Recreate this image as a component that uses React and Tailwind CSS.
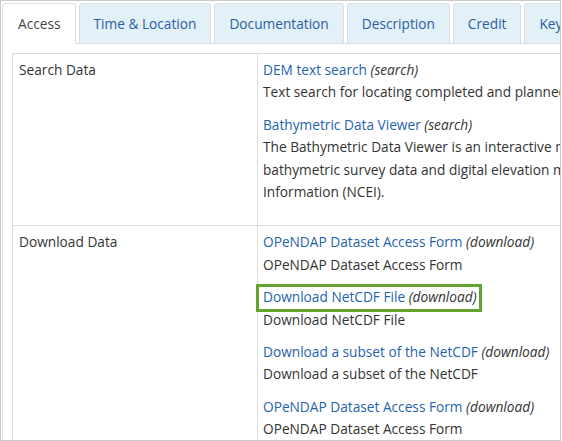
import React from 'react';

const tabs = ['Access', 'Time & Location', 'Documentation', 'Description', 'Credit', 'Keywords'];

function Entry({ title, kind, lines, boxed, last }) {
    return (
        <div className={last ? '' : 'mb-[10px]'}>
            <div className="whitespace-nowrap">
                <span className="relative inline-block">
                    <a className="text-[#1f63ad]">{title}</a> <i>({kind})</i>
                    {boxed && (
                        <span className="absolute -left-[7px] -right-[5px] -top-[2px] -bottom-[3px] border-[3px] border-[#63a22c]" />
                    )}
                </span>
            </div>
            {lines.map((l) => (
                <div key={l} className="whitespace-nowrap">{l}</div>
            ))}
        </div>
    );
}

export default function App() {
    return (
        <div className="w-[561px] h-[441px] overflow-hidden border border-[#c9c9c9] bg-white font-['Open_Sans',sans-serif] text-[13.7px] leading-[22.4px] text-[#333]">
            <div className="pl-px pt-[2px] h-full flex flex-col">
                {/* Tabs */}
                <ul className="flex h-[41px] border-b border-[#dcdcdc] shrink-0">
                    {tabs.map((t, i) =>
                        i === 0 ? (
                            <li
                                key={t}
                                className="shrink-0 h-[41px] mr-[3px] pl-[15px] pr-[14px] pt-px flex items-center bg-white border border-b-0 border-[#dcdcdc] rounded-t-[4px] text-[#444] whitespace-nowrap"
                            >
                                {t}
                            </li>
                        ) : (
                            <li
                                key={t}
                                className="shrink-0 h-[40px] mr-[3px] px-[14px] pt-px flex items-center bg-[#e2f0f7] border border-b-0 border-[#dcdcdc] rounded-t-[4px] text-[#2a5ea3] whitespace-nowrap"
                            >
                                {t}
                            </li>
                        )
                    )}
                </ul>

                {/* Panel */}
                <div className="flex-1 border-l border-[#dcdcdc] pl-[9px] pt-[9px]">
                    <div className="w-[700px] border-t border-l border-[#dcdcdc]">
                        <div className="flex border-b border-[#dcdcdc]">
                            <div className="w-[245px] shrink-0 border-r border-[#dcdcdc] pl-[6px] pt-[5px]">Search Data</div>
                            <div className="flex-1 pl-[5px] pt-[5px] pb-[22px]">
                                <Entry
                                    title="DEM text search"
                                    kind="search"
                                    lines={['Text search for locating completed and planned digital elevation models.']}
                                />
                                <Entry
                                    title="Bathymetric Data Viewer"
                                    kind="search"
                                    lines={[
                                        'The Bathymetric Data Viewer is an interactive map that displays',
                                        'bathymetric survey data and digital elevation models held at NOAA',
                                        'Information (NCEI).',
                                    ]}
                                    last
                                />
                            </div>
                        </div>
                        <div className="flex">
                            <div className="w-[245px] shrink-0 border-r border-[#dcdcdc] pl-[6px] pt-[5px]">Download Data</div>
                            <div className="flex-1 pl-[5px] pt-[5px]">
                                <Entry title="OPeNDAP Dataset Access Form" kind="download" lines={['OPeNDAP Dataset Access Form']} />
                                <Entry title="Download NetCDF File" kind="download" lines={['Download NetCDF File']} boxed />
                                <Entry title="Download a subset of the NetCDF" kind="download" lines={['Download a subset of the NetCDF']} />
                                <Entry title="OPeNDAP Dataset Access Form" kind="download" lines={['OPeNDAP Dataset Access Form']} />
                            </div>
                        </div>
                    </div>
                </div>
            </div>
        </div>
    );
}
